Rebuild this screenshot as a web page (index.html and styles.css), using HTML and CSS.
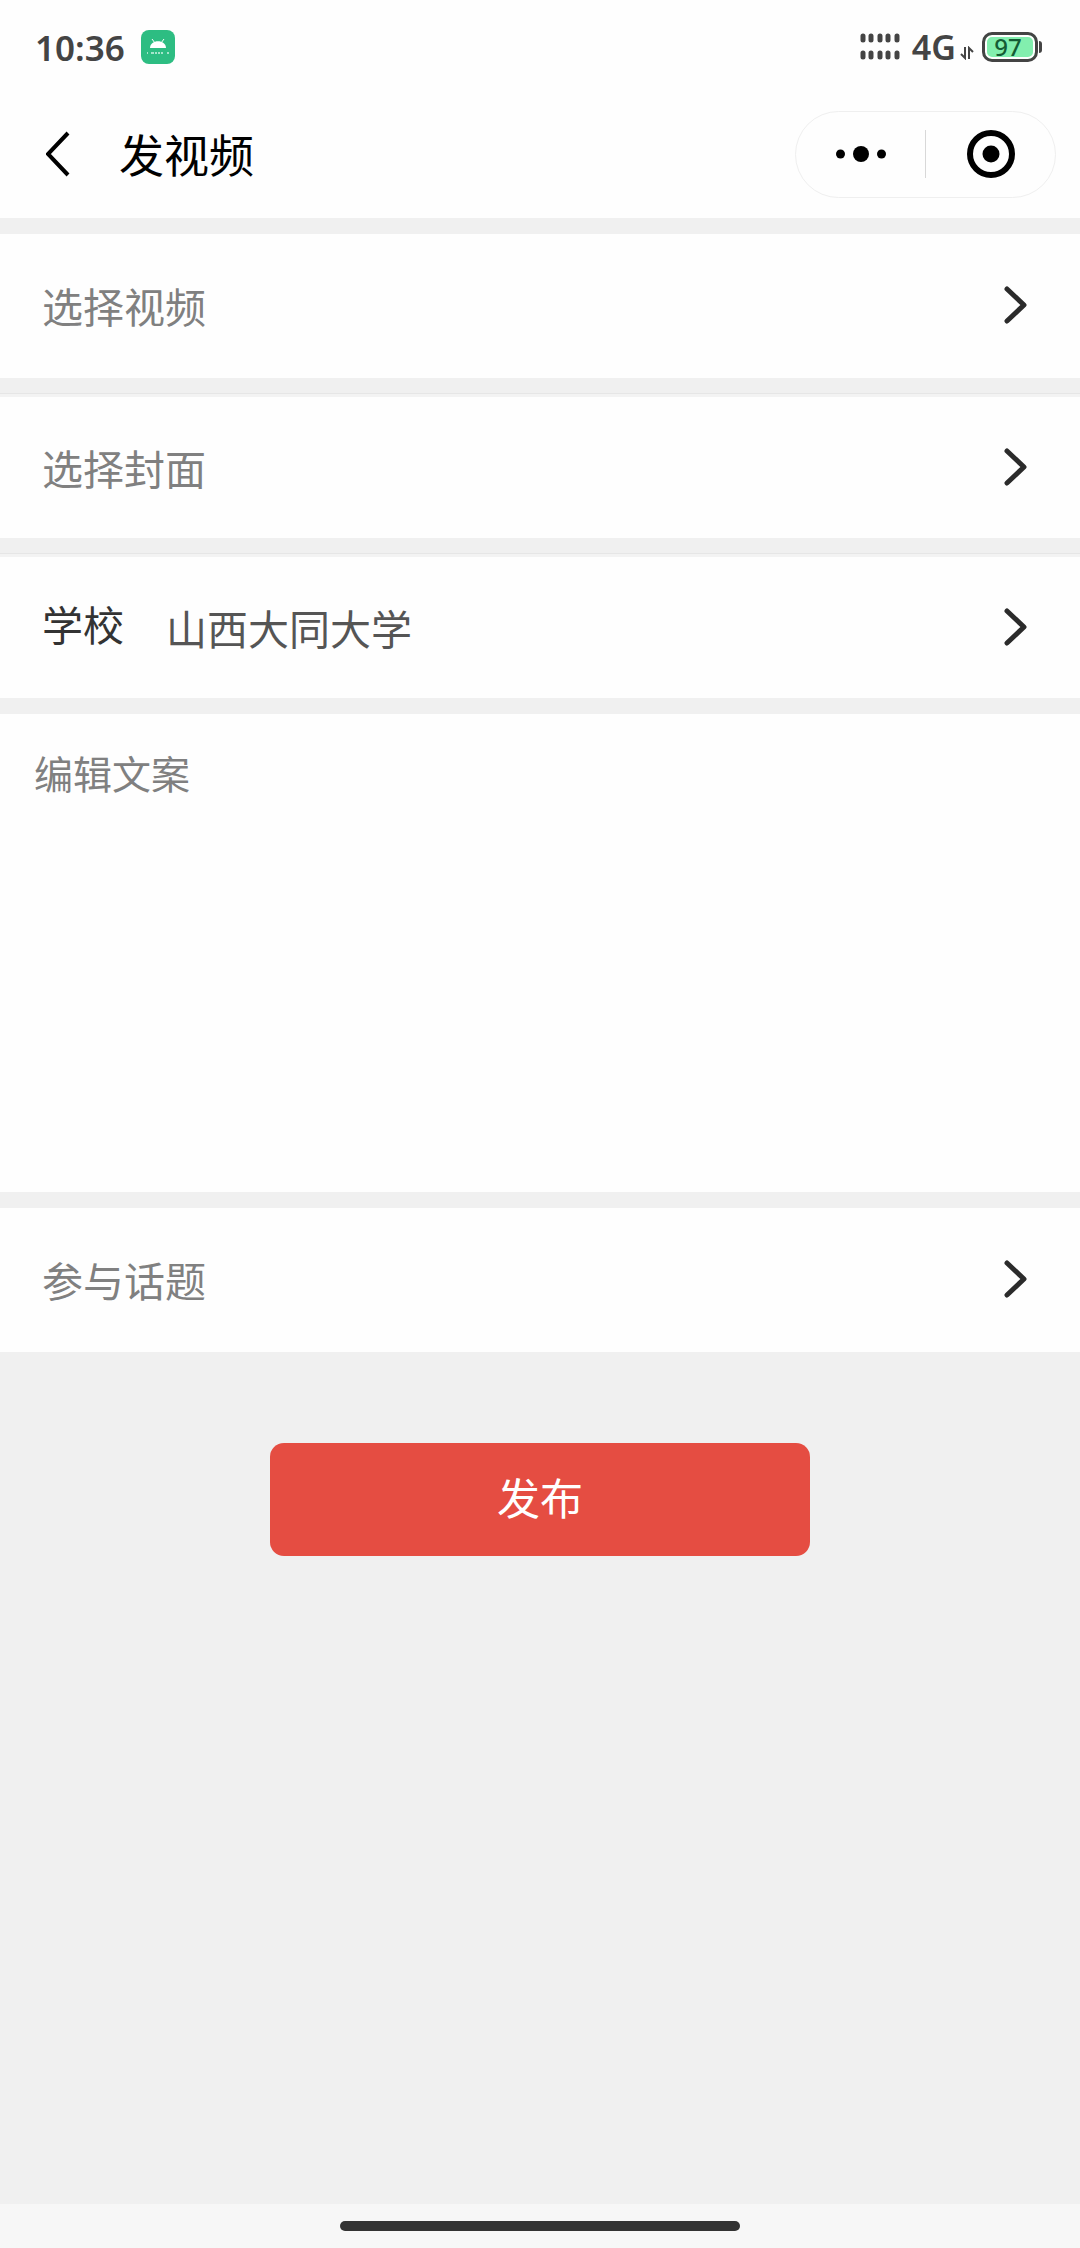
FILE: index.html
```
<!doctype html>
<html lang="zh-CN">
  <head>
    <meta charset="UTF-8" />
    <meta name="viewport" content="width=device-width, initial-scale=1.0" />
    <title>发视频</title>
    <link rel="stylesheet" href="styles.css">
  </head>
  <body>
    <header class="top">
      <div class="status-bar">
        <span class="time">10:36</span>
        <svg class="app-icon" width="34" height="34" viewBox="0 0 34 34">
          <rect width="34" height="34" rx="8" fill="#2dbd82" />
          <path d="M9 18c0-9 16-9 16 0z" fill="#fff" />
          <path d="M11 9l3 4M23 9l-3 4" stroke="#fff" stroke-width="1" />
          <path d="M6 23h1M10 23h3M14 23h2M17 23h2M20 23h2M26 23h2" stroke="#a5e5cb" stroke-width="2" />
        </svg>
        <div class="status-right">
          <svg width="40" height="30" viewBox="0 0 40 30" stroke="#444" stroke-width="5" stroke-linecap="round">
            <path d="M3 4v4M11 4v4M20 4v4M28 4v4M37 4v4M3 21v4M11 21v4M20 21v4M28 21v4M37 21v4" />
          </svg>
          <span class="network">4G</span>
          <svg class="data-arrows" width="14" height="14" viewBox="0 0 14 14" fill="none" stroke="#444" stroke-width="2">
            <path d="M5 1v11L1 8M9 13V2l4 4" />
          </svg>
          <div class="battery">97</div>
        </div>
      </div>
      <nav class="nav-bar">
        <button class="back" type="button" aria-label="返回">
          <svg width="24" height="46" viewBox="0 0 24 46" fill="none" stroke="#000" stroke-width="4">
            <path d="M22 2L2 23l20 21" />
          </svg>
        </button>
        <h1>发视频</h1>
        <div class="capsule">
          <button type="button" aria-label="更多">
            <svg width="50" height="16" viewBox="0 0 50 16">
              <circle cx="4.500" cy="8" r="4.500" />
              <circle cx="25" cy="8" r="8" />
              <circle cx="45.500" cy="8" r="4.500" />
            </svg>
          </button>
          <button type="button" aria-label="关闭">
            <svg width="48" height="48" viewBox="0 0 48 48">
              <circle cx="24" cy="24" r="21" fill="none" stroke="#000" stroke-width="6" />
              <circle cx="24" cy="24" r="8.500" />
            </svg>
          </button>
        </div>
      </nav>
    </header>

    <main class="form">
      <button class="row" type="button">
        <span class="hint">选择视频</span>
        <svg class="arrow" width="24" height="40" viewBox="0 0 24 40"><path d="M3 4l17 16L3 36" /></svg>
      </button>
      <button class="row lined" type="button">
        <span class="hint">选择封面</span>
        <svg class="arrow" width="24" height="40" viewBox="0 0 24 40"><path d="M3 4l17 16L3 36" /></svg>
      </button>
      <button class="row lined" type="button">
        <span class="label">学校</span>
        <span class="value">山西大同大学</span>
        <svg class="arrow" width="24" height="40" viewBox="0 0 24 40"><path d="M3 4l17 16L3 36" /></svg>
      </button>
      <textarea class="copy" placeholder="编辑文案" aria-label="编辑文案"></textarea>
      <button class="row" type="button">
        <span class="hint">参与话题</span>
        <svg class="arrow" width="24" height="40" viewBox="0 0 24 40"><path d="M3 4l17 16L3 36" /></svg>
      </button>
      <button class="publish" type="button">发布</button>
    </main>

    <footer class="home-bar">
      <div class="home-indicator"></div>
    </footer>
  </body>
</html>
```
FILE: styles.css
```
* {
  box-sizing: border-box;
}
body {
  margin: 0;
  min-height: 100vh;
  display: flex;
  flex-direction: column;
  background-color: #f0f0f0;
  color: #333;
  font-family: 'Noto Sans CJK SC', sans-serif;
}
button {
  margin: 0;
  padding: 0;
  border: none;
  background: none;
  font-family: inherit;
  cursor: pointer;
}
svg {
  display: block;
  flex-shrink: 0;
}
.top {
  background-color: #fefefe;
}
.status-bar {
  display: flex;
  align-items: center;
  height: 92px;
  padding: 2px 42px 0 35px;
  color: #444;
  font-family: 'Noto Sans', sans-serif;
  font-weight: 600;
}
.time {
  font-size: 35px;
}
.app-icon {
  margin-left: 16px;
}
.status-right {
  display: flex;
  align-items: center;
  margin-left: auto;
}
.network {
  margin-left: 12px;
  font-size: 34px;
}
.data-arrows {
  margin: 12px 8px 0 4px;
}
.battery {
  position: relative;
  width: 56px;
  height: 30px;
  padding-right: 4px;
  border: 3px solid #444;
  border-radius: 10px;
  background-color: #82efae;
  box-shadow: inset 0 0 0 2px #fefefe;
  color: #145c34;
  font-size: 24px;
  font-weight: 500;
  line-height: 24px;
  text-align: center;
}
.battery::after {
  content: '';
  position: absolute;
  top: 6px;
  right: -7px;
  width: 3px;
  height: 12px;
  border-radius: 0 3px 3px 0;
  background-color: #444;
}
.nav-bar {
  display: flex;
  align-items: center;
  height: 126px;
  padding: 0 24px 2px 46px;
}
.nav-bar h1 {
  margin: 0 auto 0 49px;
  padding-bottom: 2px;
  color: #000;
  font-size: 45px;
  font-weight: 400;
}
.capsule {
  display: flex;
  align-items: center;
  width: 261px;
  height: 87px;
  border: 1px solid #efefef;
  border-radius: 44px;
}
.capsule button {
  flex: 1;
  display: flex;
  align-items: center;
  justify-content: center;
  height: 48px;
}
.capsule button + button {
  border-left: 1px solid #d8d8d8;
}
.form {
  flex: 1;
  display: flex;
  flex-direction: column;
  padding-top: 16px;
}
.row {
  display: flex;
  align-items: center;
  height: 144px;
  margin-bottom: 16px;
  padding: 0 52px 2px 42px;
  background-color: #fefefe;
  font-size: 41px;
  line-height: 60px;
  text-align: left;
}
.lined {
  border-top: 3px solid #f3f3f3;
  box-shadow: 0 -1px #e6e6e6;
}
.hint {
  color: #808080;
}
.label {
  padding-bottom: 8px;
  color: #333;
}
.value {
  margin-left: 42px;
  color: #555;
}
.arrow {
  margin-left: auto;
  fill: none;
  stroke: #2b2b2b;
  stroke-width: 5;
  stroke-linecap: round;
  stroke-linejoin: round;
}
.copy {
  display: block;
  width: 100%;
  height: 478px;
  margin: 0 0 16px;
  padding: 28px 34px;
  border: none;
  outline: none;
  resize: none;
  background-color: #fefefe;
  color: #333;
  font-family: inherit;
  font-size: 39px;
  line-height: 60px;
}
.copy::placeholder {
  color: #808080;
}
.publish {
  align-self: center;
  width: 50%;
  height: 113px;
  margin-top: 75px;
  padding-bottom: 8px;
  border-radius: 14px;
  background-color: #e54d42;
  color: #fff;
  font-size: 43px;
}
.home-bar {
  display: flex;
  justify-content: center;
  height: 44px;
  padding-top: 17px;
  background-color: #f7f7f7;
}
.home-indicator {
  width: 37%;
  height: 10px;
  border-radius: 5px;
  background-color: #333;
}
```
